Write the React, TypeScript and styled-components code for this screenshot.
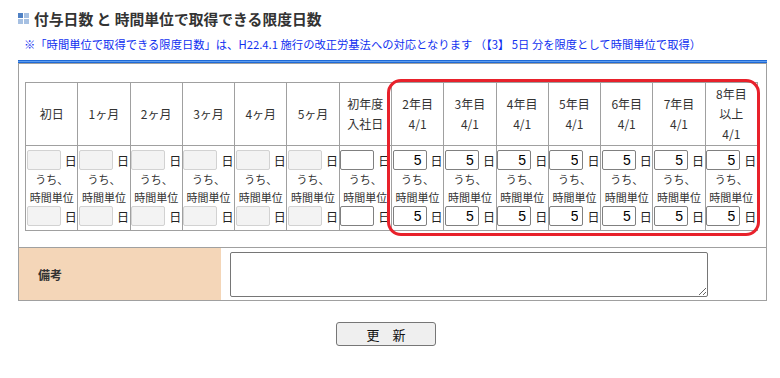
import { createGlobalStyle, styled } from "styled-components"

const GlobalStyle = createGlobalStyle`
  body {
    margin: 0;
    background: #fff;
    color: #333;
    font-family: "Noto Sans CJK JP", "Noto Sans", sans-serif;
  }
`

const Page = styled.div`
  width: 780px;
`

const TitleRow = styled.h2`
  display: flex;
  align-items: center;
  gap: 5px;
  height: 20px;
  margin: 8px 0 0 18px;
  font-size: 14.8px;
  font-weight: bold;
  color: #333;
`

const TitleIcon = styled.span`
  display: grid;
  grid-template-columns: 5px 5px;
  grid-template-rows: 5px 5px;
  gap: 1px;
`

const IconSquare = styled.i<{ $dark?: boolean }>`
  display: block;
  background: ${(p) => (p.$dark ? "#4f81c4" : "#a6c0e2")};
`

const Note = styled.p`
  margin: 8px 0 0 24px;
  font-size: 11.3px;
  line-height: 16px;
  color: #1030f0;
`

const BlueBar = styled.div`
  width: 749px;
  height: 1px;
  margin: 8px 0 0 18px;
  background: #5b9bef;
  border-top: 1px solid #1f6ad6;
  border-bottom: 1px solid #1f6ad6;
`

const Box = styled.div`
  box-sizing: border-box;
  width: 749px;
  margin-left: 18px;
  border: 1px solid #a0a0a0;
`

const TableArea = styled.div`
  padding: 18px 8px 16px 6px;
`

const TableWrap = styled.div`
  position: relative;
  width: 733px;
`

const Grid = styled.table`
  width: 733px;
  border-collapse: collapse;
  table-layout: fixed;
`

const HeadCell = styled.th`
  height: 62px;
  padding: 0;
  border: 1px solid #a0a0a0;
  font-size: 12px;
  font-weight: normal;
  line-height: 20px;
  color: #333;
  text-align: center;
  vertical-align: middle;
`

const BodyCell = styled.td`
  height: 84px;
  padding: 0;
  border: 1px solid #a0a0a0;
  text-align: center;
  vertical-align: middle;
`

const InputLine = styled.div`
  display: flex;
  align-items: center;
  justify-content: center;
  gap: 4px;
  height: 20px;
  font-size: 12px;
  color: #222;
`

const DayInput = styled.input`
  box-sizing: border-box;
  width: 34px;
  height: 20px;
  margin: 0;
  padding: 0 4px;
  border: 1px solid ${(p) => (p.disabled ? "#d2d2d2" : "#808080")};
  border-radius: 2px;
  background: ${(p) => (p.disabled ? "#f3f3f3" : "#fff")};
  font-family: "Liberation Sans", sans-serif;
  font-size: 14px;
  color: #000;
  text-align: right;
`

const SubLabel = styled.div`
  font-size: 11px;
  line-height: 18px;
  color: #333;
`

const Highlight = styled.div`
  position: absolute;
  left: 362px;
  top: -3px;
  width: 373px;
  height: 157px;
  box-sizing: border-box;
  border: 3px solid #e8212b;
  border-radius: 14px;
  pointer-events: none;
`

const RemarkRow = styled.div`
  display: flex;
  border-top: 1px solid #a0a0a0;
`

const RemarkLabel = styled.div`
  display: flex;
  align-items: center;
  width: 183px;
  padding-left: 19px;
  background: #f4d6b8;
  font-size: 12px;
  font-weight: bold;
  color: #333;
`

const RemarkField = styled.div`
  padding: 4px 9px 3px;
`

const Memo = styled.textarea`
  box-sizing: border-box;
  display: block;
  width: 478px;
  height: 45px;
  margin: 0;
  border: 1px solid #767676;
  border-radius: 2px;
  resize: both;
`

const Actions = styled.div`
  display: flex;
  justify-content: center;
  width: 772px;
  margin-top: 21px;
`

const UpdateButton = styled.button`
  width: 100px;
  height: 24px;
  border: 1px solid #767676;
  border-radius: 3px;
  background: #efefef;
  font-family: "Noto Sans CJK JP", sans-serif;
  font-size: 13px;
  color: #111;
`

const headers: string[][] = [
  ["初日"],
  ["1ヶ月"],
  ["2ヶ月"],
  ["3ヶ月"],
  ["4ヶ月"],
  ["5ヶ月"],
  ["初年度", "入社日"],
  ["2年目", "4/1"],
  ["3年目", "4/1"],
  ["4年目", "4/1"],
  ["5年目", "4/1"],
  ["6年目", "4/1"],
  ["7年目", "4/1"],
  ["8年目", "以上", "4/1"],
]

const DayField = ({ value, disabled }: { value: string; disabled: boolean }) => (
  <InputLine>
    <DayInput disabled={disabled} defaultValue={value} />
    <span>日</span>
  </InputLine>
)

export default function App() {
  return (
    <Page>
      <GlobalStyle />
      <TitleRow>
        <TitleIcon>
          <IconSquare $dark />
          <IconSquare />
          <IconSquare />
          <IconSquare />
        </TitleIcon>
        付与日数 と 時間単位で取得できる限度日数
      </TitleRow>
      <Note>
        ※「時間単位で取得できる限度日数」は、H22.4.1 施行の改正労基法への対応となります （【3】 5日 分を限度として時間単位で取得）
      </Note>
      <BlueBar />
      <Box>
        <TableArea>
          <TableWrap>
            <Grid>
              <tbody>
                <tr>
                  {headers.map((lines, i) => (
                    <HeadCell key={i}>
                      {lines.map((l, j) => (
                        <div key={j}>{l}</div>
                      ))}
                    </HeadCell>
                  ))}
                </tr>
                <tr>
                  {headers.map((_, i) => {
                    const disabled = i < 6
                    const value = i >= 7 ? "5" : ""
                    return (
                      <BodyCell key={i}>
                        <DayField value={value} disabled={disabled} />
                        <SubLabel>うち、</SubLabel>
                        <SubLabel>時間単位</SubLabel>
                        <DayField value={value} disabled={disabled} />
                      </BodyCell>
                    )
                  })}
                </tr>
              </tbody>
            </Grid>
            <Highlight />
          </TableWrap>
        </TableArea>
        <RemarkRow>
          <RemarkLabel>備考</RemarkLabel>
          <RemarkField>
            <Memo />
          </RemarkField>
        </RemarkRow>
      </Box>
      <Actions>
        <UpdateButton>更　新</UpdateButton>
      </Actions>
    </Page>
  )
}
